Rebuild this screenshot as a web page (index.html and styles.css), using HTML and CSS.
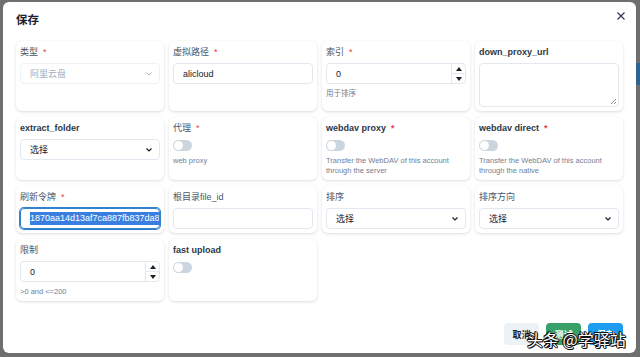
FILE: index.html
```html
<!DOCTYPE html>
<html lang="zh-CN">
<head>
    <meta charset="UTF-8">
    <meta name="viewport" content="width=device-width, initial-scale=1.0">
    <title>保存</title>
    <link rel="stylesheet" href="styles.css">
</head>
<body>
    <div class="behind-btn"></div>

    <div class="modal">
        <div class="modal-header">
            <h2>保存</h2>
            <button class="close-btn" aria-label="close">
                <svg width="8" height="8" viewBox="0 0 8 8">
                    <path d="M0.5 0.5 L7.5 7.5 M7.5 0.5 L0.5 7.5" stroke="#2d3748" stroke-width="1.2" fill="none"/>
                </svg>
            </button>
        </div>

        <div class="modal-body">
            <!-- row 1 -->
            <div class="field-card">
                <label class="zh">类型<span class="req">*</span></label>
                <div class="input select disabled">
                    <span>阿里云盘</span>
                    <svg class="chevron" width="6" height="4" viewBox="0 0 6 4"><path d="M0.5 0.5 L3 3 L5.5 0.5" stroke="#a0aec0" stroke-width="1" fill="none"/></svg>
                </div>
            </div>
            <div class="field-card">
                <label class="zh">虚拟路径<span class="req">*</span></label>
                <div class="input"><span>alicloud</span></div>
            </div>
            <div class="field-card">
                <label class="zh">索引<span class="req">*</span></label>
                <div class="input number">
                    <span class="num-value">0</span>
                    <div class="stepper">
                        <span class="step up"></span>
                        <span class="step down"></span>
                    </div>
                </div>
                <p class="hint">用于排序</p>
            </div>
            <div class="field-card">
                <label>down_proxy_url</label>
                <div class="input textarea"><span class="grip"></span></div>
            </div>

            <!-- row 2 -->
            <div class="field-card">
                <label>extract_folder</label>
                <div class="input select">
                    <span>选择</span>
                    <svg class="chevron" width="6" height="4" viewBox="0 0 6 4"><path d="M0.5 0.5 L3 3 L5.5 0.5" stroke="#1a202c" stroke-width="1.2" fill="none"/></svg>
                </div>
            </div>
            <div class="field-card">
                <label class="zh">代理<span class="req">*</span></label>
                <span class="switch"></span>
                <p class="hint">web proxy</p>
            </div>
            <div class="field-card">
                <label>webdav proxy<span class="req">*</span></label>
                <span class="switch"></span>
                <p class="hint">Transfer the WebDAV of this account through the server</p>
            </div>
            <div class="field-card">
                <label>webdav direct<span class="req">*</span></label>
                <span class="switch"></span>
                <p class="hint">Transfer the WebDAV of this account through the native</p>
            </div>

            <!-- row 3 -->
            <div class="field-card">
                <label class="zh">刷新令牌<span class="req">*</span></label>
                <div class="input focused"><span class="selected">1870aa14d13af7ca887fb837da8</span></div>
            </div>
            <div class="field-card">
                <label class="zh">根目录file_id</label>
                <div class="input"></div>
            </div>
            <div class="field-card">
                <label class="zh">排序</label>
                <div class="input select">
                    <span>选择</span>
                    <svg class="chevron" width="6" height="4" viewBox="0 0 6 4"><path d="M0.5 0.5 L3 3 L5.5 0.5" stroke="#1a202c" stroke-width="1.2" fill="none"/></svg>
                </div>
            </div>
            <div class="field-card">
                <label class="zh">排序方向</label>
                <div class="input select">
                    <span>选择</span>
                    <svg class="chevron" width="6" height="4" viewBox="0 0 6 4"><path d="M0.5 0.5 L3 3 L5.5 0.5" stroke="#1a202c" stroke-width="1.2" fill="none"/></svg>
                </div>
            </div>

            <!-- row 4 -->
            <div class="field-card">
                <label class="zh">限制</label>
                <div class="input number">
                    <span class="num-value">0</span>
                    <div class="stepper">
                        <span class="step up"></span>
                        <span class="step down"></span>
                    </div>
                </div>
                <p class="hint">&gt;0 and &lt;=200</p>
            </div>
            <div class="field-card">
                <label>fast upload</label>
                <span class="switch"></span>
            </div>
        </div>

        <div class="modal-footer">
            <button class="btn cancel">取消</button>
            <button class="btn test">测试</button>
            <button class="btn save">保存</button>
        </div>
    </div>

    <div class="watermark">头条 @学驿站</div>
</body>
</html>
```

FILE: styles.css
```css
html, body {
    margin: 0;
    padding: 0;
}
body {
    width: 640px;
    height: 357px;
    overflow: hidden;
    position: relative;
    background-color: #6f6f6f;
    font-family: 'Liberation Sans', Arial, 'Noto Sans CJK SC', sans-serif;
    color: #1a202c;
}
.behind-btn {
    position: absolute;
    left: 634px;
    top: 63px;
    width: 12px;
    height: 22px;
    background-color: #2c6590;
    border-radius: 3px;
}
.modal {
    position: relative;
    margin: 2px 4px 0 3px;
    height: 351px;
    background-color: white;
    border-radius: 6px;
    display: flex;
    flex-direction: column;
    box-sizing: border-box;
}
.modal-header {
    display: flex;
    justify-content: space-between;
    align-items: flex-start;
    padding: 10px 11px 0 13px;
    height: 39px;
    box-sizing: border-box;
}
.modal-header h2 {
    margin: 0;
    font-size: 11.5px;
    line-height: 16px;
    font-weight: 700;
    color: #1a202c;
}
.close-btn {
    border: none;
    background: none;
    padding: 0;
    width: 8px;
    height: 8px;
    display: block;
}
.close-btn svg {
    display: block;
}
.modal-body {
    display: grid;
    grid-template-columns: repeat(4, 148px);
    column-gap: 5px;
    row-gap: 6px;
    padding: 0 13px;
    align-items: stretch;
}
.field-card {
    background-color: white;
    border-radius: 6px;
    box-shadow: 0 1px 3px rgba(0, 0, 0, 0.14);
    padding: 4px;
    display: flex;
    flex-direction: column;
    align-items: flex-start;
}
.field-card label {
    font-size: 9px;
    line-height: 13px;
    font-weight: 600;
    color: #2d3748;
    margin: 1px 0 4px;
}
.field-card label.zh {
    font-weight: 400;
    color: #4a5568;
}
.req {
    color: #e53e3e;
    margin-left: 5px;
}
.input {
    width: 100%;
    height: 21px;
    box-sizing: border-box;
    border: 1px solid #e2e8f0;
    border-radius: 4px;
    padding: 0 9px;
    display: flex;
    align-items: center;
    font-size: 9px;
    color: #1a202c;
    overflow: hidden;
    white-space: nowrap;
    position: relative;
}
.select {
    justify-content: space-between;
    padding-right: 7px;
}
.select.disabled {
    border-color: #edf2f7;
    color: #a0aec0;
}
.chevron {
    display: block;
    flex-shrink: 0;
}
.number {
    padding-right: 0;
}
.num-value {
    flex: 1;
}
.stepper {
    width: 13px;
    height: 100%;
    border-left: 1px solid #e2e8f0;
    display: flex;
    flex-direction: column;
}
.step {
    flex: 1;
    display: flex;
    align-items: center;
    justify-content: center;
}
.step.down {
    border-top: 1px solid #e2e8f0;
}
.step.up::after {
    content: "";
    border-left: 3px solid transparent;
    border-right: 3px solid transparent;
    border-bottom: 4px solid #1a202c;
}
.step.down::after {
    content: "";
    border-left: 3px solid transparent;
    border-right: 3px solid transparent;
    border-top: 4px solid #1a202c;
}
.textarea {
    height: 44px;
}
.grip {
    position: absolute;
    right: 2px;
    bottom: 2px;
    width: 5px;
    height: 5px;
    background: linear-gradient(135deg, transparent 45%, #9a9a9a 45%, #9a9a9a 55%, transparent 55%, transparent 75%, #9a9a9a 75%, #9a9a9a 85%, transparent 85%);
}
.focused {
    border-color: #3182ce;
    box-shadow: 0 0 0 1px #3182ce;
}
.selected {
    background-color: #3a7fe0;
    color: white;
    line-height: 13px;
}
.switch {
    display: block;
    width: 19px;
    height: 11px;
    margin-top: 1px;
    border-radius: 6px;
    background-color: #cbd5e0;
    position: relative;
}
.switch::after {
    content: "";
    position: absolute;
    left: 1px;
    top: 1px;
    width: 9px;
    height: 9px;
    border-radius: 50%;
    background-color: white;
}
.hint {
    margin: 5px 0 0;
    font-size: 7.5px;
    line-height: 10px;
    color: #718096;
}
.modal-footer {
    margin-top: auto;
    display: flex;
    justify-content: flex-end;
    gap: 7px;
    padding: 0 13px 8px;
}
.btn {
    width: 35px;
    height: 22px;
    border: none;
    border-radius: 4px;
    font-family: inherit;
    font-size: 9px;
    font-weight: 600;
    padding: 0;
}
.btn.cancel {
    background-color: #edf2f7;
    color: #1a202c;
}
.btn.test {
    background-color: #38a169;
    color: white;
}
.btn.save {
    background-color: #1e9df0;
    color: white;
}
.watermark {
    position: absolute;
    left: 527px;
    top: 329px;
    font-family: 'Noto Sans CJK SC', sans-serif;
    font-size: 16px;
    line-height: 20px;
    color: white;
    text-shadow: -1px 0 #111, 1px 0 #111, 0 -1px #111, 0 1px #111, 1px 1px #111, -1px -1px #111;
}
```
